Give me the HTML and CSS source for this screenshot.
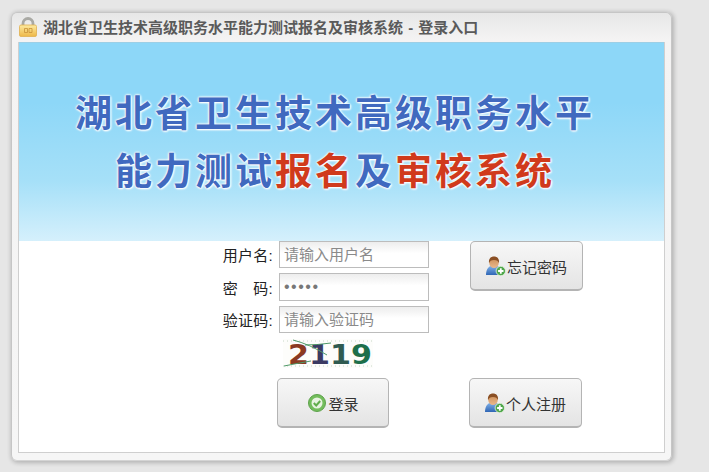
FILE: index.html
```html
<!DOCTYPE html>
<html lang="zh-CN">
<head>
<meta charset="utf-8">
<title>登录入口</title>
<link rel="stylesheet" href="styles.css">
</head>
<body>
<svg class="defs" width="0" height="0" aria-hidden="true">
  <defs>
    <linearGradient id="skin" x1="0" y1="0" x2="0" y2="1"><stop offset="0" stop-color="#c98a52"/><stop offset="1" stop-color="#e9b88c"/></linearGradient>
    <linearGradient id="shirt" x1="0" y1="0" x2="0" y2="1"><stop offset="0" stop-color="#7fb0e8"/><stop offset="1" stop-color="#2f66b5"/></linearGradient>
    <symbol id="user-add" viewBox="0 0 20 20">
      <path d="M0 19c0-5 2-8 4.500-9h7c2.500 1 4.500 4 4.500 7v2z" fill="url(#shirt)"/>
      <ellipse cx="8" cy="6.500" rx="4.800" ry="5.500" fill="url(#skin)"/>
      <path d="M3 7C2.500 2.500 5 .5 8 .5S13.500 2.500 13 7c-1-2-2-3-5-3S4 5 3 7z" fill="#8a4f24"/>
      <circle cx="14.800" cy="15" r="4.700" fill="#4ea64a" stroke="#e6f2e0" stroke-width=".8"/>
      <path d="M14.800 12.300v5.400M12.100 15h5.400" stroke="#fff" stroke-width="1.800"/>
    </symbol>
  </defs>
</svg>
<main class="window">
  <h1 class="title">
    <svg class="lock" viewBox="0 0 18 20" width="18" height="20" aria-hidden="true">
      <defs><linearGradient id="gold" x1="0" y1="0" x2="0" y2="1"><stop offset="0" stop-color="#fdeaa0"/><stop offset="1" stop-color="#eeb848"/></linearGradient></defs>
      <path d="M4 9V6.500a5 5 0 0 1 10 0V9" fill="none" stroke="#a9a9a4" stroke-width="2.800"/>
      <rect x=".5" y="8" width="17" height="11.500" rx="1.500" fill="url(#gold)" stroke="#e0b050" stroke-width=".8"/>
      <path d="M5.500 11.500h3v4h-3zM10 11.500h3v4h-3z" fill="none" stroke="#c8923a" stroke-width=".8"/>
    </svg>
    <span>湖北省卫生技术高级职务水平能力测试报名及审核系统 - 登录入口</span>
  </h1>
  <div class="panel">
    <header class="banner">
      <p class="banner-line">湖北省卫生技术高级职务水平</p>
      <p class="banner-line">能力测试<em>报名</em>及<em>审核系统</em></p>
    </header>
    <form class="form">
      <label class="label" for="user">用户名:</label>
      <input class="input" id="user" type="text" placeholder="请输入用户名">
      <button class="btn btn-forgot" type="button"><svg class="btn-icon" aria-hidden="true"><use href="#user-add"/></svg>忘记密码</button>
      <label class="label" for="pass">密&emsp;码:</label>
      <input class="input input-pass" id="pass" type="password" value="12345">
      <label class="label" for="code">验证码:</label>
      <input class="input" id="code" type="text" placeholder="请输入验证码">
      <svg class="captcha" viewBox="0 0 90 29" width="90" height="29" role="img" aria-label="验证码图片">
        <rect width="90" height="29" fill="#fdfdfb"/>
        <g fill="none" stroke="#c8d8c8" stroke-dasharray="1 3"><path d="M0 2h90M0 27h90"/></g>
        <text class="captcha-text" x="5" y="25" textLength="84" lengthAdjust="spacingAndGlyphs"><tspan fill="#8b3a22">2</tspan><tspan fill="#3b3a62">1</tspan><tspan fill="#2f5a50">1</tspan><tspan fill="#1d6f4a">9</tspan></text>
        <path d="M1 27Q16 24 28 22M10 1Q26 5 44 16M22 6Q34 6 48 4" fill="none" stroke="#4f9a68" stroke-width="1"/>
      </svg>
      <button class="btn btn-login" type="button">
        <svg class="btn-icon" viewBox="0 0 20 20" aria-hidden="true">
          <circle cx="10" cy="10" r="8.500" fill="#73bd5c" stroke="#5da24b"/>
          <circle cx="10" cy="10" r="5.500" fill="#e9f3e2"/>
          <path d="M6.800 10l2.400 2.500 4-4.500" fill="none" stroke="#62ad4d" stroke-width="2"/>
        </svg>登录</button>
      <button class="btn btn-register" type="button"><svg class="btn-icon" aria-hidden="true"><use href="#user-add"/></svg>个人注册</button>
    </form>
  </div>
</main>
</body>
</html>
```
FILE: styles.css
```css
* { box-sizing: border-box; }
html, body { margin: 0; }
body {
  width: 709px;
  height: 472px;
  padding: 12px 0 0 11px;
  background: #e6e6e6;
  overflow: hidden;
  font-family: "Liberation Sans", "Noto Sans CJK SC", sans-serif;
}
.defs { position: absolute; }
.window {
  width: 661px;
  height: 449px;
  padding: 0 7px 9px;
  border: 1px solid #c6c6c6;
  border-bottom-color: #d4d4d4;
  border-radius: 6px;
  background: linear-gradient(#e7e7e7 0, #f4f3f3 26px, #f6f6f6 100%);
  box-shadow: 1px 1px 4px 1px rgba(0,0,0,.22);
}
.title {
  display: flex;
  align-items: center;
  gap: 6px;
  height: 29px;
  margin: 0 0 0 -6px;
  padding: 0 0 2px 6px;
  font-size: 15px;
  font-weight: bold;
  word-spacing: 1px;
  color: #5a5a5a;
}
.lock { flex: none; }
.panel {
  height: 411px;
  margin: 0 -1px;
  background: #fff;
  border: solid #cfcfcf;
  border-width: 0 1px 1px;
}
.banner {
  height: 199px;
  padding: 46px 13px 0 0;
  background: linear-gradient(#8dd7f8 0, #8dd7f8 30%, #a6e0f8 70%, #d5f0fc 100%);
  border-top: 1px solid #9ccfe6;
}
.banner-line {
  margin: 0;
  height: 44px;
  line-height: 44px;
  text-align: center;
  font-family: "Noto Sans CJK SC", sans-serif;
  font-size: 37px;
  font-weight: 700;
  letter-spacing: 3px;
  color: #4069bf;
  text-shadow: 0 0 2px #fff, 0 0 2px #fff, 0 0 3px #fff, 1px 1px 2px #fff;
}
.banner-line + .banner-line { margin-top: 14px; }
.banner-line em { font-style: normal; color: #d03a1c; }
.form {
  display: grid;
  grid-template-columns: 254px 150px 113px;
  column-gap: 6px;
  grid-template-rows: 27px 28px 27px 29px 50px;
  row-gap: 5px;
  align-items: center;
}
.label {
  text-align: right;
  font-size: 15px;
  letter-spacing: .3px;
  color: #222;
}
.input {
  width: 150px;
  height: 100%;
  padding: 0 4px;
  border: 1px solid #bcbcbc;
  background: linear-gradient(#ededed, #fff 45%);
  font: 15px "Liberation Sans", "Noto Sans CJK SC", sans-serif;
  color: #777;
  outline: none;
}
.input::placeholder { color: #8a8a8a; opacity: 1; }
.input-pass { letter-spacing: 1.500px; font-size: 16px; }
.btn {
  display: flex;
  align-items: center;
  justify-content: center;
  width: 113px;
  height: 50px;
  padding: 1px 0 0;
  border: 1px solid #b4b4b4;
  border-bottom-width: 2px;
  border-radius: 5px;
  background: linear-gradient(#f7f7f7, #e4e4e4);
  font: 15px "Liberation Sans", "Noto Sans CJK SC", sans-serif;
  color: #333;
}
.btn-icon { flex: none; width: 20px; height: 20px; margin-right: 1px; }
.btn-forgot {
  grid-column: 3;
  grid-row: 1 / span 3;
  align-self: start;
  margin-left: 35px;
}
.captcha {
  grid-column: 2;
  grid-row: 4;
  align-self: start;
  margin: 1px 0 0 4px;
  overflow: visible;
}
.captcha-text {
  font: 900 26px "DejaVu Sans", sans-serif;
}
.btn-login {
  grid-column: 2;
  grid-row: 5;
  align-self: start;
  width: 112px;
  margin: 6px 0 0 -2px;
}
.btn-register {
  grid-column: 3;
  grid-row: 5;
  align-self: start;
  margin: 6px 0 0 34px;
}
```
